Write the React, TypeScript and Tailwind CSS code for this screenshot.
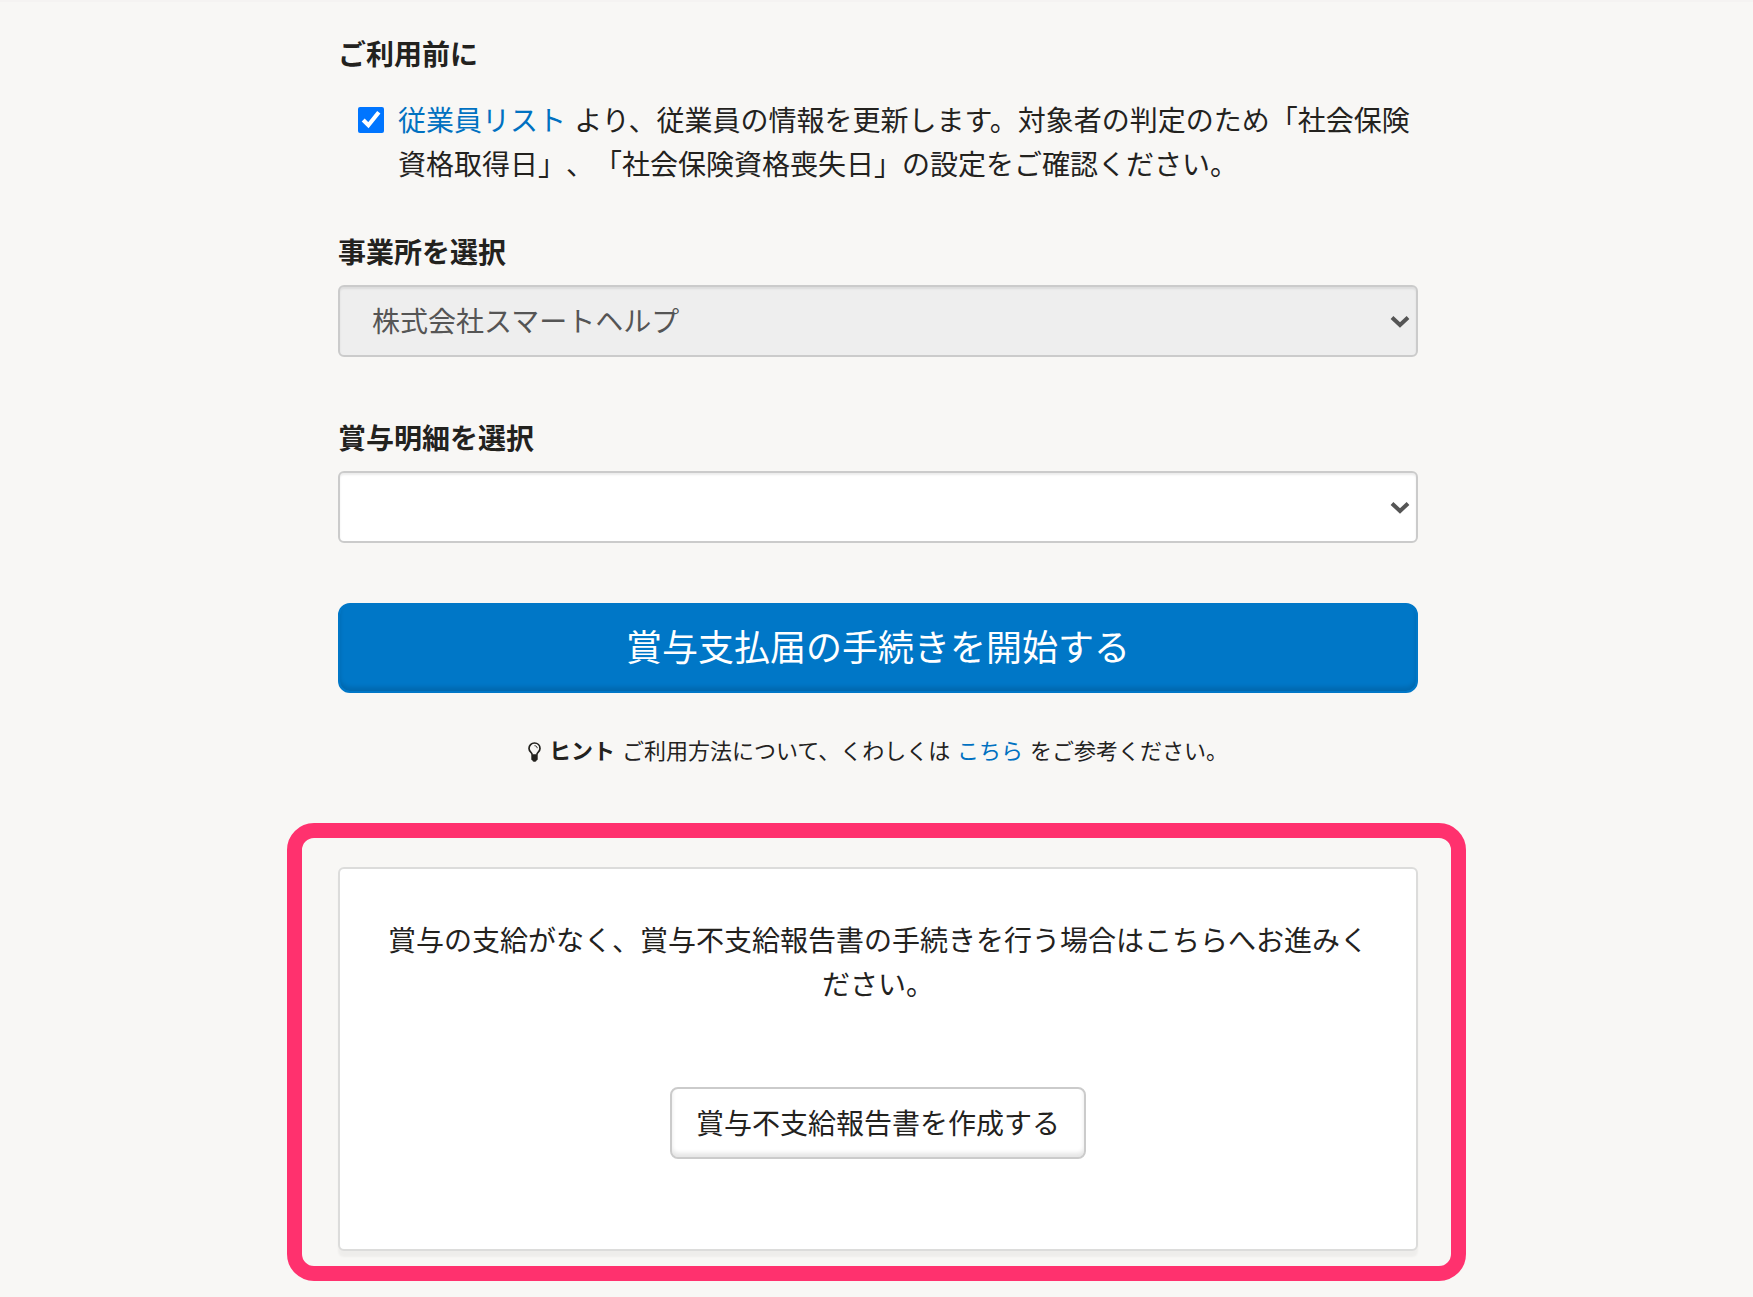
import React, { FC, ReactNode, useState } from "react";

const BulbIcon = () => (
  <svg
    viewBox="0 0 13 20"
    className="mr-2 inline-block h-5 w-[13px] align-[-3px]"
    fill="none"
    aria-hidden="true"
  >
    <path
      d="M4.2 12.6C4 10.6 1 9.4 1 6.4C1 3.3 3.4 1 6.5 1C9.6 1 12 3.3 12 6.4C12 9.4 9 10.6 8.8 12.6"
      stroke="currentColor"
      strokeWidth="1.7"
    />
    <path d="M6.5 3.7C8 3.7 9.2 4.7 9.2 6.2" stroke="currentColor" />
    <path
      d="M3.3 12.3H9.7V17.2C9.7 18 9 18.2 8.5 18.4C8.2 19.4 7.4 19.8 6.5 19.8C5.6 19.8 4.8 19.4 4.5 18.4C4 18.2 3.3 18 3.3 17.2Z"
      fill="currentColor"
    />
  </svg>
);

const SelectField: FC<{
  id: string;
  label: string;
  disabled?: boolean;
  children?: ReactNode;
}> = ({ id, label, disabled, children }) => {
  return (
    <div className="flex flex-col gap-3">
      <label htmlFor={id} className="font-bold">
        {label}
      </label>
      <div className="relative">
        <select
          id={id}
          disabled={disabled}
          className="block h-[72px] w-full appearance-none rounded-md border-2 border-[#cbcbcb] bg-white px-8 pb-0.5 text-[#555] shadow-[inset_0_2px_2px_rgba(0,0,0,0.075)] disabled:bg-[#eee] disabled:opacity-100"
        >
          {children}
        </select>
        <svg
          viewBox="0 0 20 12"
          className="pointer-events-none absolute top-[31px] right-2 h-3 w-5"
          fill="none"
          aria-hidden="true"
        >
          <path d="M2 1.5L10 9L18 1.5" stroke="#555" strokeWidth="4" />
        </svg>
      </div>
    </div>
  );
};

const App = () => {
  const [checked, setChecked] = useState(true);

  return (
    <div className="min-h-screen border-t-2 border-[#f5f3f2] bg-[#f8f7f5] pt-[29px] pr-4 pb-[46px] pl-[19px] font-['Noto_Sans_CJK_JP',sans-serif] text-[28px] leading-[44px] text-[#23221e] [text-spacing-trim:space-all]">
      <main className="mx-auto max-w-[1080px]">
        {/* before use */}
        <h2 className="font-bold">ご利用前に</h2>
        <div className="mt-[22px] flex items-start gap-3.5 pl-5">
          <input
            id="confirm"
            type="checkbox"
            checked={checked}
            onChange={(e) => setChecked(e.target.checked)}
            className="mt-2.5 size-[26px] shrink-0"
          />
          <label htmlFor="confirm">
            <a href="#employees" className="mr-0.5 text-[#0071c1]">
              従業員リスト
            </a>{" "}
            より、従業員の情報を更新します。対象者の判定のため「社会保険資格取得日」、「社会保険資格喪失日」の設定をご確認ください。
          </label>
        </div>

        {/* form */}
        <form className="mt-11" onSubmit={(e) => e.preventDefault()}>
          <div className="flex flex-col gap-[58px]">
            <SelectField id="office" label="事業所を選択" disabled>
              <option>株式会社スマートヘルプ</option>
            </SelectField>
            <SelectField id="bonus" label="賞与明細を選択">
              <option></option>
            </SelectField>
          </div>
          <button
            type="submit"
            className="mt-[60px] block h-[90px] w-full rounded-xl border-2 border-[#0077c7] bg-[#0077c7] pb-1.5 text-[36px] text-white shadow-[inset_0_-4px_4px_rgba(0,0,0,0.12)]"
          >
            賞与支払届の手続きを開始する
          </button>
        </form>

        <p className="mt-10 text-center text-[22px] leading-8">
          <BulbIcon />
          <b className="mr-0.5">ヒント</b>{" "}
          ご利用方法について、くわしくは{" "}
          <a href="#help" className="mx-0.5 text-[#0071c1]">
            こちら
          </a>{" "}
          をご参考ください。
        </p>

        {/* no payment report */}
        <section className="relative mt-[102px] flex flex-col items-center rounded-md border-2 border-[#dcdcdb] bg-white px-12 pt-12 pb-[90px] text-center shadow-[0_6px_2px_rgba(0,0,0,0.04)]">
          <p>
            賞与の支給がなく、賞与不支給報告書の手続きを行う場合はこちらへお進みください。
          </p>
          <button
            type="button"
            className="mt-[82px] h-[72px] rounded-lg border-2 border-[#cbcbcb] bg-white px-6 pb-0.5 shadow-[inset_0_-4px_4px_rgba(0,0,0,0.1)]"
          >
            賞与不支給報告書を作成する
          </button>
          <div className="pointer-events-none absolute -top-[46px] -right-[50px] -bottom-8 -left-[53px] rounded-[27px] border-[15px] border-[#ff316e]" />
        </section>
      </main>
    </div>
  );
};

export default App;
